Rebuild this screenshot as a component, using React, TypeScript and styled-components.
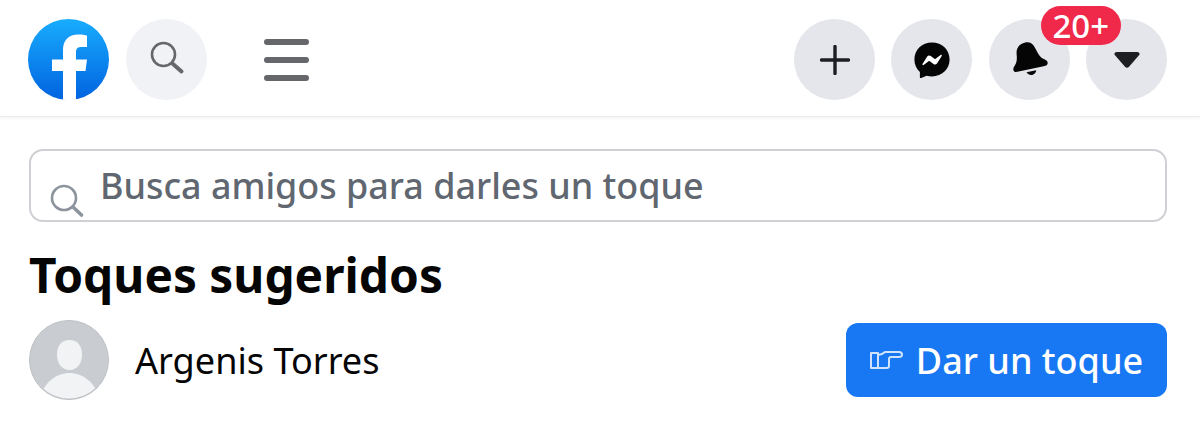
import styled, { createGlobalStyle } from "styled-components";

const GlobalStyle = createGlobalStyle`
    html, body {
        margin: 0;
        padding: 0;
        background: #fff;
        font-family: "Noto Sans", "Open Sans", sans-serif;
    }
`

const Page = styled.div`
    width: 1200px;
    height: 434px;
    overflow: hidden;
    background: #fff;
`

const Header = styled.header`
    box-sizing: border-box;
    height: 117px;
    padding: 19px 33px 0 28px;
    display: flex;
    justify-content: space-between;
    align-items: flex-start;
    border-bottom: 1px solid #ececee;
    box-shadow: 0 2px 3px rgba(0, 0, 0, 0.04);
`

const HeaderGroup = styled.div`
    display: flex;
    align-items: center;
`

const LeftGroup = styled(HeaderGroup)`
    gap: 17px;
`

const RightGroup = styled(HeaderGroup)`
    gap: 16.3px;
`

const Logo = styled.svg`
    display: block;
    width: 81px;
    height: 81px;
`

const RoundButton = styled.div<{ $light?: boolean }>`
    position: relative;
    width: 81px;
    height: 81px;
    border-radius: 50%;
    display: flex;
    align-items: center;
    justify-content: center;
    background: ${({ $light }) => ($light ? "#f0f2f5" : "#e4e6eb")};
`

const MenuButton = styled.div`
    margin-left: 40px;
    width: 81px;
    height: 81px;
    display: flex;
    flex-direction: column;
    justify-content: center;
    gap: 12px;
    & > span {
        display: block;
        width: 45px;
        height: 6px;
        border-radius: 3px;
        background: #65676b;
    }
`

const Badge = styled.span`
    position: absolute;
    top: -13px;
    left: 52px;
    z-index: 2;
    width: 80px;
    height: 39px;
    border-radius: 20px;
    background: #f02849;
    color: #fff;
    font-size: 33px;
    font-weight: 500;
    line-height: 40px;
    text-align: center;
`

const Content = styled.main`
    padding: 32px 33px 0 29px;
`

const SearchBox = styled.div`
    box-sizing: border-box;
    height: 73px;
    border: 2px solid #ced0d4;
    border-radius: 14px;
    display: flex;
    align-items: flex-start;
    padding-left: 18px;
`

const SearchIcon = styled.svg`
    flex: none;
    width: 36px;
    height: 36px;
    margin-top: 32px;
`

const SearchText = styled.span`
    margin-left: 15px;
    margin-top: 13px;
    font-size: 35.9px;
    font-weight: 500;
    line-height: 44px;
    color: #606770;
`

const Title = styled.h2`
    margin: 20px 0 0;
    font-size: 47.8px;
    line-height: 66px;
    font-weight: 700;
    color: #050505;
`

const PersonRow = styled.div`
    margin-top: 12px;
    display: flex;
    align-items: center;
    justify-content: space-between;
`

const Person = styled.div`
    display: flex;
    align-items: center;
    gap: 26px;
`

const Avatar = styled.svg`
    display: block;
    width: 80px;
    height: 80px;
`

const Name = styled.span`
    font-size: 36.1px;
    color: #050505;
`

const PokeButton = styled.div`
    box-sizing: border-box;
    width: 321px;
    height: 74px;
    border-radius: 12px;
    background: #1877f2;
    color: #fff;
    display: flex;
    align-items: center;
    justify-content: center;
    gap: 13px;
    font-size: 36px;
    font-weight: 500;
`

const App = () => {
    return <Page>
        <GlobalStyle />
        <Header>
            <LeftGroup>
                <Logo viewBox="0 0 81 81">
                    <defs>
                        <linearGradient id="fb" x1="0" y1="0" x2="0" y2="1">
                            <stop offset="0" stopColor="#18acfe" />
                            <stop offset="1" stopColor="#0163e0" />
                        </linearGradient>
                    </defs>
                    <circle cx="40.5" cy="40.5" r="40.5" fill="url(#fb)" />
                    <path fill="#fff" d="M35 80.800V52H24V40.500h11V31c0-10 6-15.500 15-15.500 4 0 7 .5 9 1V28h-5.500c-4.500 0-5.500 2.200-5.500 5.500v7h11L57.500 52H48v28.800c-2 .2-4.500.2-6.500.2s-4.500 0-6.500-.2z" />
                </Logo>
                <RoundButton $light>
                    <svg width="36" height="36" viewBox="0 0 36 36" fill="none" stroke="#65676b" style={{ marginTop: -4 }}>
                        <circle cx="14.500" cy="14.500" r="11.500" strokeWidth="2.600" />
                        <path d="M24 24l8.500 7.500" strokeWidth="4" strokeLinecap="round" />
                    </svg>
                </RoundButton>
                <MenuButton>
                    <span />
                    <span />
                    <span />
                </MenuButton>
            </LeftGroup>
            <RightGroup>
                <RoundButton>
                    <svg width="30" height="30" viewBox="0 0 30 30" fill="none" stroke="#1c1e21" strokeWidth="3.400" strokeLinecap="round">
                        <path d="M15 1.500v27M1.500 15h27" />
                    </svg>
                </RoundButton>
                <RoundButton>
                    <svg width="36" height="36" viewBox="0 0 36 36">
                        <path fill="#050505" d="M18 .5C8 .5.4 7.800.4 17.500c0 5.100 2.100 9.500 5.500 12.500v5.600c0 .5.5.8 1 .6l5.700-2.500c1.700.5 3.500.7 5.400.7 10 0 17.600-7.300 17.600-16.900C35.600 7.800 28 .5 18 .5z" />
                        <path fill="#fff" d="M8.500 22l4.700-7.400c.8-1.200 2.400-1.500 3.500-.6l3.700 2.800c.4.300.8.300 1.200 0l5-3.800c.7-.5 1.500.3 1.100 1l-4.700 7.400c-.8 1.200-2.400 1.500-3.500.6l-3.700-2.800c-.4-.3-.8-.3-1.200 0l-5 3.800c-.7.5-1.500-.3-1.100-1z" />
                    </svg>
                </RoundButton>
                <RoundButton>
                    <svg width="38" height="38" viewBox="0 0 38 38" fill="#050505">
                        <g transform="rotate(-12 19 19)">
                            <path d="M19 1C11 1 8.500 6.500 8 11.500 7.500 16 6.500 19 4 21.500 2 23.300 1.500 24.800 1.700 26c.3 1.300 1.500 2.200 3.500 2.200h28c2 0 3.300-1 3.500-2.700.2-1.500-.8-2.800-2.500-4-3.500-2.500-4.700-5.500-5.700-9.500C27 6.500 26 1 19 1z" />
                            <path d="M14 30.500h10c-.6 2-2.800 3.800-5 3.800s-4.400-1.800-5-3.800z" />
                        </g>
                    </svg>
                    <Badge>20+</Badge>
                </RoundButton>
                <RoundButton>
                    <svg width="26" height="16" viewBox="0 0 26 16">
                        <path fill="#1c1e21" d="M3 0h20c2.500 0 3.200 2 2 3.300L15 14.800c-1 1.300-3 1.300-4 0L1 3.300C-.2 2 .5 0 3 0z" />
                    </svg>
                </RoundButton>
            </RightGroup>
        </Header>
        <Content>
            <SearchBox>
                <SearchIcon viewBox="0 0 36 36" fill="none" stroke="#8d949e">
                    <circle cx="15" cy="15" r="12" strokeWidth="2.600" />
                    <path d="M24 24l8.500 8" strokeWidth="3.600" strokeLinecap="round" />
                </SearchIcon>
                <SearchText>Busca amigos para darles un toque</SearchText>
            </SearchBox>
            <Title>Toques sugeridos</Title>
            <PersonRow>
                <Person>
                    <Avatar viewBox="0 0 80 80">
                        <defs>
                            <clipPath id="av">
                                <circle cx="40" cy="40" r="38.500" />
                            </clipPath>
                        </defs>
                        <circle cx="40" cy="40" r="39.500" fill="#c9ccd1" stroke="#bcc0c4" />
                        <g clipPath="url(#av)" fill="#f2f3f5">
                            <path d="M40.500 20c8 0 12.500 6 12.500 14.500S48.500 50 40.500 50 28 43 28 34.500 32.500 20 40.500 20z" />
                            <path d="M12 76c3-13 15-23 28.500-23S66 63 69.500 76v6H12z" />
                        </g>
                    </Avatar>
                    <Name>Argenis Torres</Name>
                </Person>
                <PokeButton>
                    <svg width="33" height="20" viewBox="0 0 33 20" fill="none" stroke="#cfe3fd" strokeWidth="2" strokeLinejoin="round">
                        <path d="M1 3h7v15H1z" />
                        <path d="M8 5c3-.5 5-1 7-3h14c2 0 3 1 3 2.500S31 7 29 7H21c-1 0-2 1-2 2v7c0 1.500-1 2-2.500 2H8" />
                    </svg>
                    Dar un toque
                </PokeButton>
            </PersonRow>
        </Content>
    </Page>
}

export default App;
